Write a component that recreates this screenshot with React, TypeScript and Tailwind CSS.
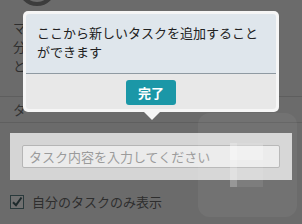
import React from 'react';

export default function App() {
  return (
    <div
      className="relative w-[302px] h-[224px] overflow-hidden bg-[#6b6b6b] text-[#2b2b2b]"
      style={{ fontFamily: '"Noto Sans CJK JP", "Noto Sans", sans-serif' }}
    >
      {/* page behind the overlay */}
      <div className="flex flex-col">
        <div className="ml-[18px] mt-[-32px] w-[38px] h-[38px] rounded-full border-[4px] border-[#3c3c3c]" />
        <div className="pl-[13px] pt-[12px] text-[13px] leading-[19px] text-[#2e2e2e]">
          <p>マ</p>
          <p>分</p>
          <p>と</p>
        </div>
        <div className="mt-[21px] border-t border-[#5e5e5e]" />
        <div className="pl-[13px] h-[25px] flex items-center text-[13px] text-[#333]">タ</div>
        <div className="border-t border-[#5f5f5f]" />

        <div className="mx-[10px] mt-[10px] h-[47px] bg-[#d5d5d5] flex items-center px-[12px]">
          <div className="w-full h-[23px] bg-[#ebebeb] border border-[#b5b5b5] rounded-[2px] flex items-center px-[6px] text-[13px] text-[#9b9b9b]">
            タスク内容を入力してください
          </div>
        </div>

        <div className="mt-[12px] ml-[10px] flex items-center gap-[8px] leading-[19px]">
          <div className="w-[14px] h-[14px] border-[1.5px] border-[#2a3a3c] bg-[#707070] flex items-center justify-center">
            <svg width="12" height="12" viewBox="0 0 12 12">
              <path d="M2 6.2 L5 9.2 L10.5 1.5" fill="none" stroke="#1e2a2c" strokeWidth="2" />
            </svg>
          </div>
          <span className="text-[13px] text-[#2e2e2e]">自分のタスクのみ表示</span>
        </div>
      </div>

      {/* faint watermark on the right */}
      <div className="absolute left-[198px] top-[113px] w-[99px] h-[104px] rounded-[12px] bg-white/[0.05]">
        <div className="absolute left-[32px] top-[30px] w-[33px] h-[44px] bg-white/[0.08]">
          <div className="absolute left-0 top-0 w-[7px] h-[44px] bg-white/20" />
          <div className="absolute left-0 top-[2px] w-[33px] h-[15px] bg-white/25" />
        </div>
      </div>

      {/* tooltip */}
      <div className="absolute left-[23px] top-[11px] w-[256px] h-[101px] bg-[#f6f6f6] rounded-[5px] p-[3px] flex flex-col">
        <div className="h-[60px] bg-[#dfe6ec] rounded-t-[3px] border-b border-[#8f9aa2] pl-[11px] pt-[9px] text-[13px] leading-[19px] text-[#222]">
          ここから新しいタスクを追加すること
          <br />
          ができます
        </div>
        <div className="flex-1 bg-[#e8e8e8] rounded-b-[3px] flex justify-center pt-[6px]">
          <div className="w-[50px] h-[25px] bg-[#1b97a7] rounded-[3px] flex items-center justify-center text-[13px] font-bold text-white">
            完了
          </div>
        </div>
        <div className="absolute left-[121px] bottom-[-8px] w-0 h-0 border-l-[8px] border-r-[8px] border-t-[8px] border-l-transparent border-r-transparent border-t-[#f6f6f6]" />
      </div>
    </div>
  );
}
